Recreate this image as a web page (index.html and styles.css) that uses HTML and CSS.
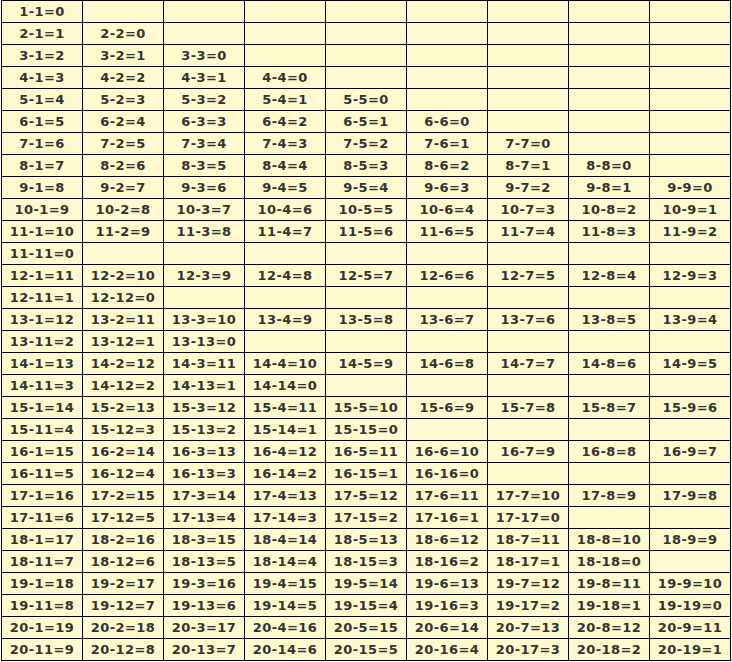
FILE: index.html
```html
<!DOCTYPE html>
<html>
<head>
<meta charset="utf-8">
<link rel="stylesheet" href="styles.css">
</head>
<body>
<table class="grid">
<tr><td>1-1=0</td><td></td><td></td><td></td><td></td><td></td><td></td><td></td><td></td></tr>
<tr><td>2-1=1</td><td>2-2=0</td><td></td><td></td><td></td><td></td><td></td><td></td><td></td></tr>
<tr><td>3-1=2</td><td>3-2=1</td><td>3-3=0</td><td></td><td></td><td></td><td></td><td></td><td></td></tr>
<tr><td>4-1=3</td><td>4-2=2</td><td>4-3=1</td><td>4-4=0</td><td></td><td></td><td></td><td></td><td></td></tr>
<tr><td>5-1=4</td><td>5-2=3</td><td>5-3=2</td><td>5-4=1</td><td>5-5=0</td><td></td><td></td><td></td><td></td></tr>
<tr><td>6-1=5</td><td>6-2=4</td><td>6-3=3</td><td>6-4=2</td><td>6-5=1</td><td>6-6=0</td><td></td><td></td><td></td></tr>
<tr><td>7-1=6</td><td>7-2=5</td><td>7-3=4</td><td>7-4=3</td><td>7-5=2</td><td>7-6=1</td><td>7-7=0</td><td></td><td></td></tr>
<tr><td>8-1=7</td><td>8-2=6</td><td>8-3=5</td><td>8-4=4</td><td>8-5=3</td><td>8-6=2</td><td>8-7=1</td><td>8-8=0</td><td></td></tr>
<tr><td>9-1=8</td><td>9-2=7</td><td>9-3=6</td><td>9-4=5</td><td>9-5=4</td><td>9-6=3</td><td>9-7=2</td><td>9-8=1</td><td>9-9=0</td></tr>
<tr><td>10-1=9</td><td>10-2=8</td><td>10-3=7</td><td>10-4=6</td><td>10-5=5</td><td>10-6=4</td><td>10-7=3</td><td>10-8=2</td><td>10-9=1</td></tr>
<tr><td>11-1=10</td><td>11-2=9</td><td>11-3=8</td><td>11-4=7</td><td>11-5=6</td><td>11-6=5</td><td>11-7=4</td><td>11-8=3</td><td>11-9=2</td></tr>
<tr><td>11-11=0</td><td></td><td></td><td></td><td></td><td></td><td></td><td></td><td></td></tr>
<tr><td>12-1=11</td><td>12-2=10</td><td>12-3=9</td><td>12-4=8</td><td>12-5=7</td><td>12-6=6</td><td>12-7=5</td><td>12-8=4</td><td>12-9=3</td></tr>
<tr><td>12-11=1</td><td>12-12=0</td><td></td><td></td><td></td><td></td><td></td><td></td><td></td></tr>
<tr><td>13-1=12</td><td>13-2=11</td><td>13-3=10</td><td>13-4=9</td><td>13-5=8</td><td>13-6=7</td><td>13-7=6</td><td>13-8=5</td><td>13-9=4</td></tr>
<tr><td>13-11=2</td><td>13-12=1</td><td>13-13=0</td><td></td><td></td><td></td><td></td><td></td><td></td></tr>
<tr><td>14-1=13</td><td>14-2=12</td><td>14-3=11</td><td>14-4=10</td><td>14-5=9</td><td>14-6=8</td><td>14-7=7</td><td>14-8=6</td><td>14-9=5</td></tr>
<tr><td>14-11=3</td><td>14-12=2</td><td>14-13=1</td><td>14-14=0</td><td></td><td></td><td></td><td></td><td></td></tr>
<tr><td>15-1=14</td><td>15-2=13</td><td>15-3=12</td><td>15-4=11</td><td>15-5=10</td><td>15-6=9</td><td>15-7=8</td><td>15-8=7</td><td>15-9=6</td></tr>
<tr><td>15-11=4</td><td>15-12=3</td><td>15-13=2</td><td>15-14=1</td><td>15-15=0</td><td></td><td></td><td></td><td></td></tr>
<tr><td>16-1=15</td><td>16-2=14</td><td>16-3=13</td><td>16-4=12</td><td>16-5=11</td><td>16-6=10</td><td>16-7=9</td><td>16-8=8</td><td>16-9=7</td></tr>
<tr><td>16-11=5</td><td>16-12=4</td><td>16-13=3</td><td>16-14=2</td><td>16-15=1</td><td>16-16=0</td><td></td><td></td><td></td></tr>
<tr><td>17-1=16</td><td>17-2=15</td><td>17-3=14</td><td>17-4=13</td><td>17-5=12</td><td>17-6=11</td><td>17-7=10</td><td>17-8=9</td><td>17-9=8</td></tr>
<tr><td>17-11=6</td><td>17-12=5</td><td>17-13=4</td><td>17-14=3</td><td>17-15=2</td><td>17-16=1</td><td>17-17=0</td><td></td><td></td></tr>
<tr><td>18-1=17</td><td>18-2=16</td><td>18-3=15</td><td>18-4=14</td><td>18-5=13</td><td>18-6=12</td><td>18-7=11</td><td>18-8=10</td><td>18-9=9</td></tr>
<tr><td>18-11=7</td><td>18-12=6</td><td>18-13=5</td><td>18-14=4</td><td>18-15=3</td><td>18-16=2</td><td>18-17=1</td><td>18-18=0</td><td></td></tr>
<tr><td>19-1=18</td><td>19-2=17</td><td>19-3=16</td><td>19-4=15</td><td>19-5=14</td><td>19-6=13</td><td>19-7=12</td><td>19-8=11</td><td>19-9=10</td></tr>
<tr><td>19-11=8</td><td>19-12=7</td><td>19-13=6</td><td>19-14=5</td><td>19-15=4</td><td>19-16=3</td><td>19-17=2</td><td>19-18=1</td><td>19-19=0</td></tr>
<tr><td>20-1=19</td><td>20-2=18</td><td>20-3=17</td><td>20-4=16</td><td>20-5=15</td><td>20-6=14</td><td>20-7=13</td><td>20-8=12</td><td>20-9=11</td></tr>
<tr><td>20-11=9</td><td>20-12=8</td><td>20-13=7</td><td>20-14=6</td><td>20-15=5</td><td>20-16=4</td><td>20-17=3</td><td>20-18=2</td><td>20-19=1</td></tr>
</table>
</body>
</html>
```

FILE: styles.css
```css
html, body {
  margin: 0;
  padding: 0;
  background: #ffffff;
}
body {
  padding-left: 1px;
}
.grid {
  border-collapse: collapse;
  table-layout: fixed;
  width: 730px;
  background: #fffacd;
  font-family: "DejaVu Sans", Verdana, sans-serif;
  font-weight: bold;
  font-size: 13px;
  letter-spacing: 0.4px;
  color: #333333;
}
.grid td {
  border: 1px solid #000000;
  height: 21px;
  padding: 0;
  text-align: center;
  vertical-align: middle;
  line-height: 21px;
  white-space: nowrap;
  overflow: hidden;
}
```
